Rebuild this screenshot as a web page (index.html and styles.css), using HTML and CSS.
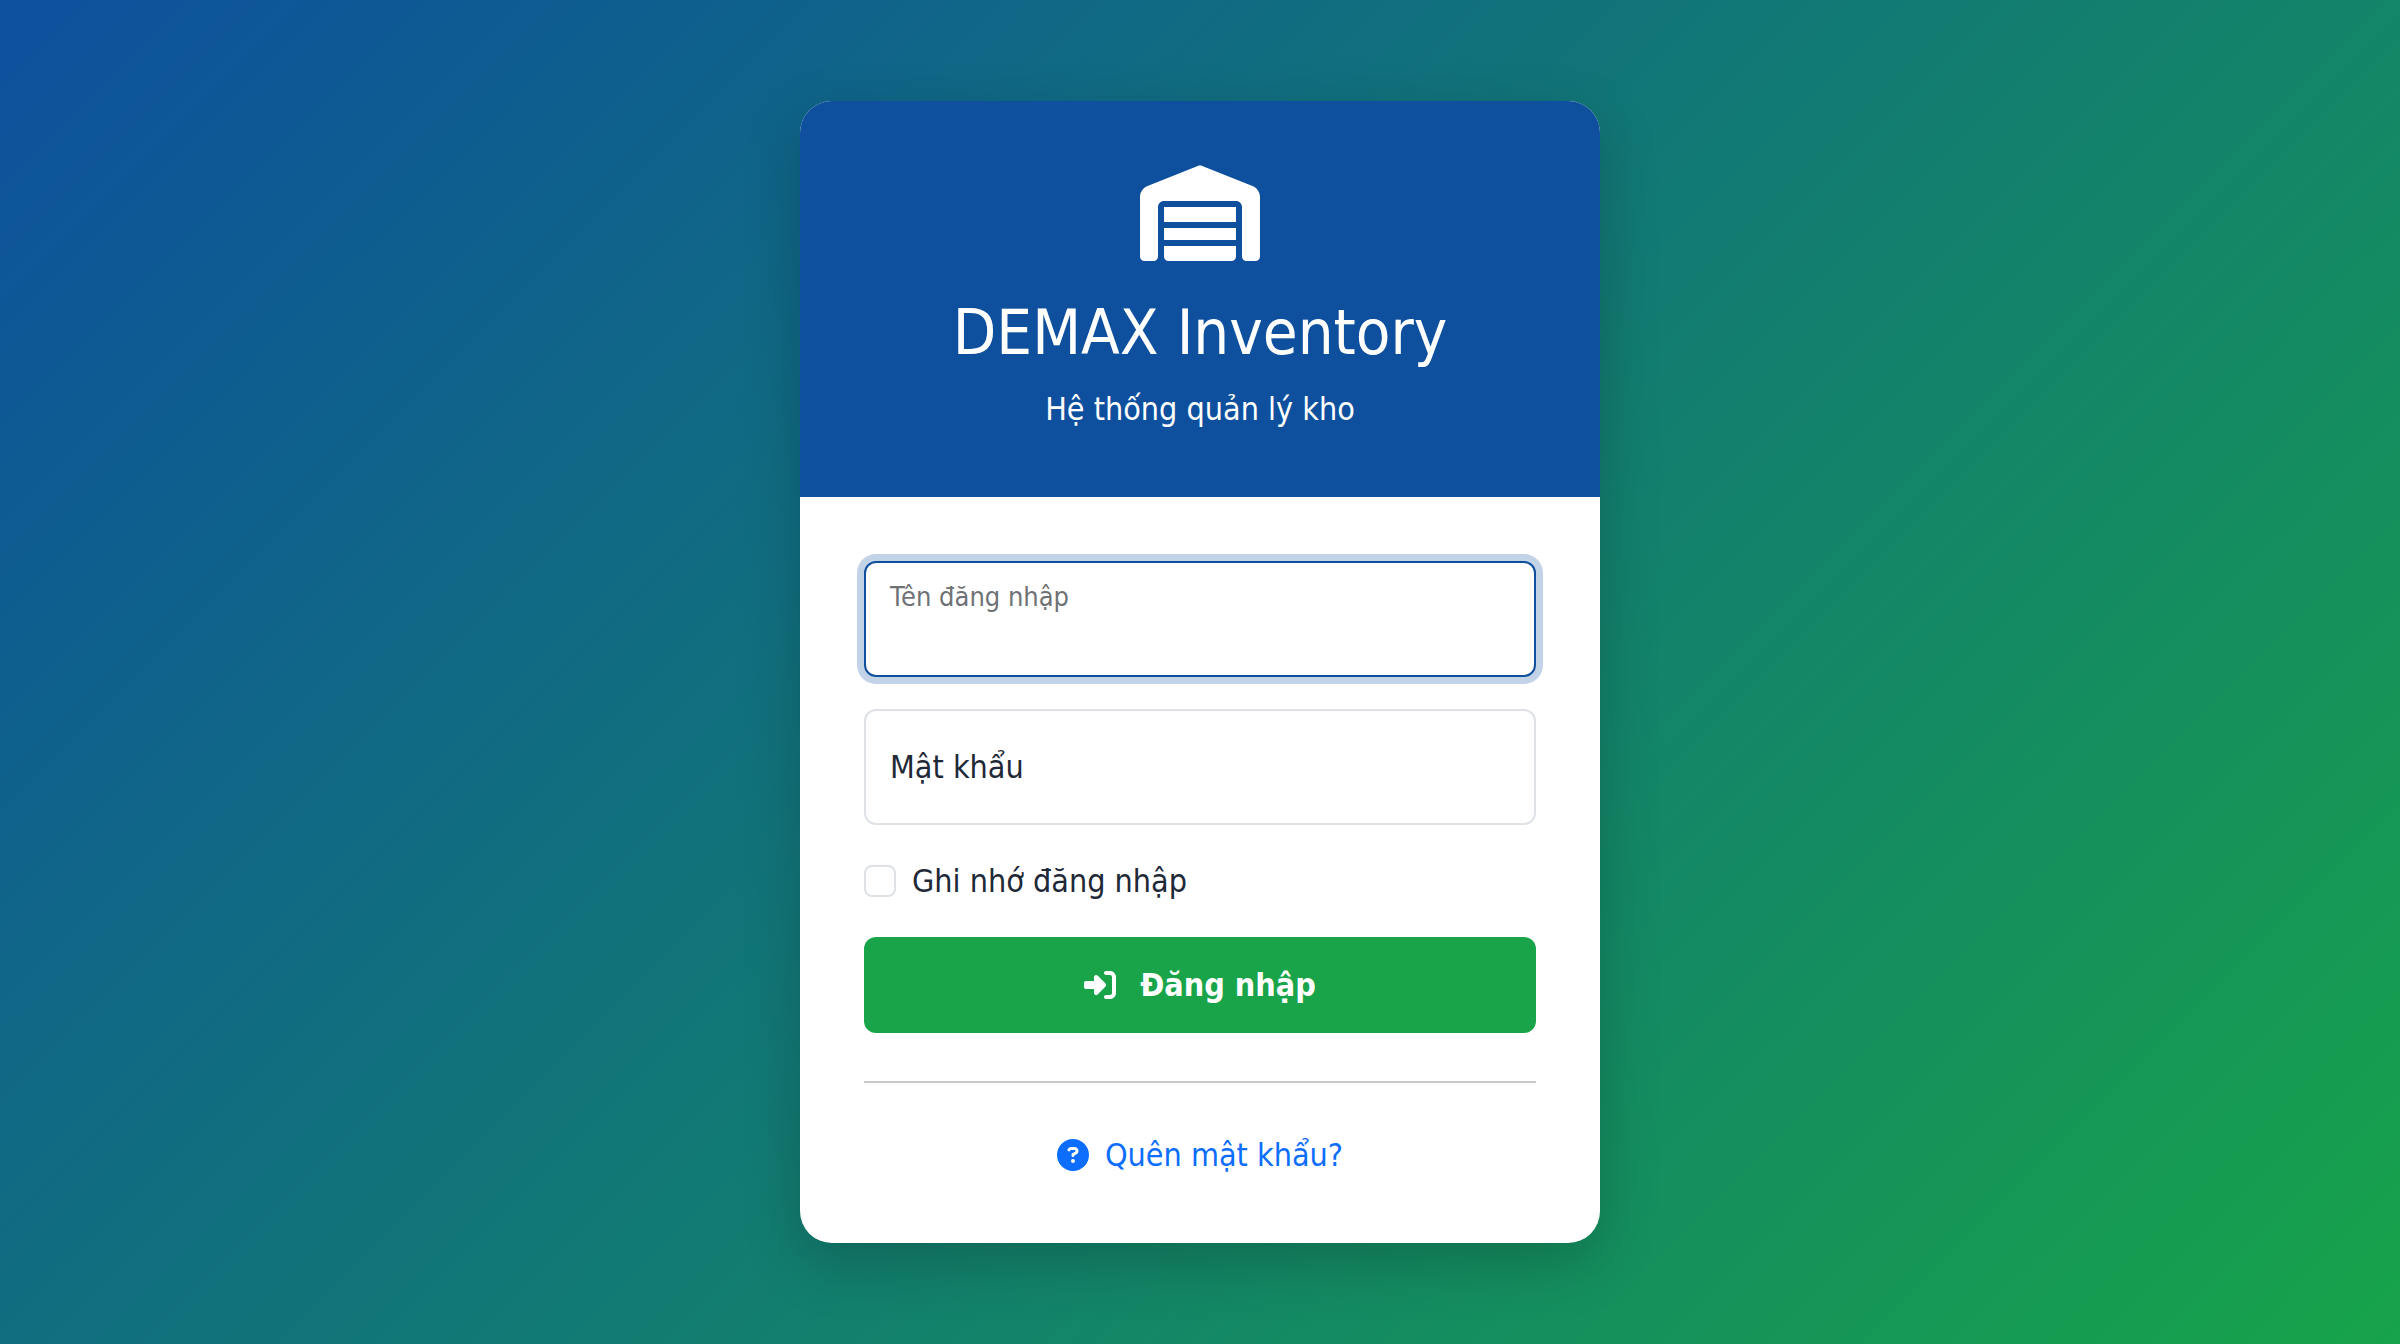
FILE: index.html
```html
<!DOCTYPE html>
<html lang="vi">
<head>
<meta charset="utf-8">
<meta name="viewport" content="width=device-width, initial-scale=1">
<title>DEMAX Inventory</title>
<link rel="stylesheet" href="styles.css">
</head>
<body>
<main class="card">
  <header class="card-header">
    <svg class="logo" viewBox="0 0 640 512" aria-hidden="true"><path d="M0 488L0 171.3c0-26.2 15.9-49.7 40.2-59.4L308.1 4.8c7.6-3.1 16.1-3.1 23.8 0L599.8 111.9c24.3 9.7 40.2 33.3 40.2 59.4L640 488c0 13.3-10.7 24-24 24l-48 0c-13.3 0-24-10.7-24-24l0-264c0-17.7-14.3-32-32-32l-384 0c-17.7 0-32 14.3-32 32l0 264c0 13.3-10.7 24-24 24l-48 0c-13.3 0-24-10.7-24-24zm488 24l-336 0c-13.3 0-24-10.7-24-24l0-56 384 0 0 56c0 13.3-10.7 24-24 24zM128 400l0-64 384 0 0 64-384 0zm0-96l0-80 384 0 0 80-384 0z"/></svg>
    <h1 class="title">DEMAX Inventory</h1>
    <p class="subtitle">Hệ thống quản lý kho</p>
  </header>
  <div class="card-body">
    <form class="form">
      <div class="field field-active">
        <input class="field-input" type="text" id="username" name="username" autocomplete="username">
        <label class="field-label" for="username">Tên đăng nhập</label>
      </div>
      <div class="field">
        <input class="field-input" type="password" id="password" name="password" autocomplete="current-password">
        <label class="field-label" for="password">Mật khẩu</label>
      </div>
      <div class="check">
        <input class="check-input" type="checkbox" id="remember" name="remember">
        <label for="remember">Ghi nhớ đăng nhập</label>
      </div>
      <button class="submit" type="submit">
        <svg class="icon" viewBox="0 0 512 512" aria-hidden="true"><path d="M217.9 105.9L340.7 228.7c7.2 7.2 11.3 17.1 11.3 27.3s-4.1 20.1-11.3 27.3L217.9 406.1c-6.4 6.4-15 9.9-24 9.9c-18.7 0-33.9-15.2-33.9-33.9l0-62.1L32 320c-17.7 0-32-14.3-32-32l0-64c0-17.7 14.3-32 32-32l128 0 0-62.1c0-18.7 15.2-33.9 33.9-33.9c9 0 17.6 3.6 24 9.9zM352 416l64 0c17.7 0 32-14.3 32-32l0-256c0-17.7-14.3-32-32-32l-64 0c-17.7 0-32-14.3-32-32s14.3-32 32-32l64 0c53 0 96 43 96 96l0 256c0 53-43 96-96 96l-64 0c-17.7 0-32-14.3-32-32s14.3-32 32-32z"/></svg>
        <span>Đăng nhập</span>
      </button>
    </form>
    <hr class="divider">
    <a class="forgot" href="#">
      <svg class="icon" viewBox="0 0 512 512" aria-hidden="true"><path d="M256 512A256 256 0 1 0 256 0a256 256 0 1 0 0 512zM169.8 165.3c7.9-22.3 29.1-37.3 52.8-37.3l58.3 0c34.9 0 63.1 28.3 63.1 63.1c0 22.6-12.1 43.5-31.7 54.8L280 264.4c-.2 13-10.9 23.6-24 23.6c-13.3 0-24-10.7-24-24l0-13.5c0-8.6 4.6-16.5 12.1-20.8l44.3-25.4c4.7-2.7 7.6-7.7 7.6-13.1c0-8.4-6.8-15.1-15.1-15.1l-58.3 0c-3.4 0-6.4 2.1-7.5 5.3l-.4 1.2c-4.4 12.5-18.2 19-30.6 14.6s-19-18.2-14.6-30.6l.4-1.2zM224 352a32 32 0 1 1 64 0 32 32 0 1 1 -64 0z"/></svg>
      <span>Quên mật khẩu?</span>
    </a>
  </div>
</main>
</body>
</html>
```
FILE: styles.css
```css
*, *::before, *::after { box-sizing: border-box; }

body {
  margin: 0;
  min-height: 100vh;
  display: flex;
  align-items: center;
  justify-content: center;
  font-family: "DejaVu Sans Condensed", "Noto Sans", sans-serif;
  font-size: 32px;
  line-height: 48px;
  color: #1f2937;
  background: linear-gradient(135deg, #0d509e 0%, #17a34a 100%);
}

.card {
  width: 100%;
  max-width: 800px;
  border-radius: 32px;
  overflow: hidden;
  background: #fff;
  box-shadow: 0 20px 60px rgba(0, 0, 0, 0.2);
}

.card-header {
  display: flex;
  flex-direction: column;
  align-items: center;
  padding: 64px;
  color: #fff;
  background: #0e509e;
  text-align: center;
}

.logo { width: 120px; height: 96px; fill: currentColor; }

.title {
  margin: 32px 0 12px;
  font-size: 63px;
  line-height: 80px;
  font-weight: 400;
}

.subtitle { margin: 0; }

.card-body {
  display: flex;
  flex-direction: column;
  padding: 64px;
}

.form { display: flex; flex-direction: column; gap: 32px; }

.field { display: grid; }

.field-input,
.field-label { grid-area: 1 / 1; }

.field-input {
  width: 100%;
  height: 116px;
  padding: 40px 24px 12px;
  border: 2px solid #dee2e6;
  border-radius: 12px;
  font: inherit;
  color: inherit;
  background: #fff;
  outline: 0;
}

.field-label {
  align-self: center;
  padding: 0 26px;
  pointer-events: none;
}

.field-active .field-input {
  border-color: #0e509e;
  box-shadow: 0 0 0 7px #c3d3e7;
}

.field-active .field-label {
  align-self: start;
  padding-top: 12px;
  font-size: 27px;
  color: #6f7275;
}

.check { display: flex; align-items: center; gap: 16px; }

.check-input {
  appearance: none;
  width: 32px;
  height: 32px;
  margin: 0;
  border: 2px solid #dee2e6;
  border-radius: 8px;
  background: #fff;
}

.submit {
  display: flex;
  align-items: center;
  justify-content: center;
  gap: 24px;
  height: 96px;
  padding: 0 24px;
  border: 0;
  border-radius: 12px;
  font: inherit;
  font-weight: 700;
  color: #fff;
  background: #19a44a;
}

.icon { width: 32px; height: 32px; fill: currentColor; }

.divider {
  width: 100%;
  margin: 48px 0;
  border: 0;
  border-top: 2px solid #c7c9cd;
}

.forgot {
  display: flex;
  align-items: center;
  align-self: center;
  gap: 16px;
  color: #0d6efd;
  text-decoration: none;
}
```
